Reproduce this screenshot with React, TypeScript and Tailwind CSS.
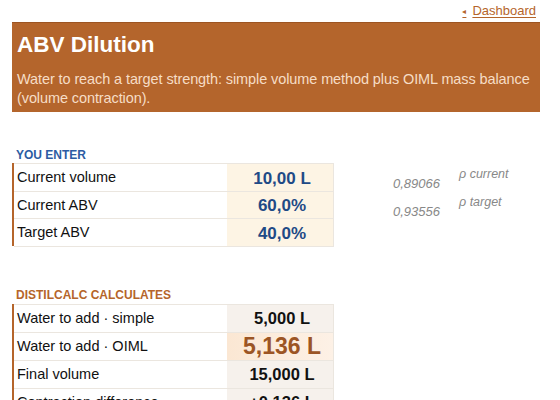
import React from "react";

const font = { fontFamily: '"Liberation Sans", Arial, sans-serif' };

type Row = { label: string; value: string; big?: boolean };

const inputs: Row[] = [
  { label: "Current volume", value: "10,00 L" },
  { label: "Current ABV", value: "60,0%" },
  { label: "Target ABV", value: "40,0%" },
];

const outputs: Row[] = [
  { label: "Water to add · simple", value: "5,000 L" },
  { label: "Water to add · OIML", value: "5,136 L", big: true },
  { label: "Final volume", value: "15,000 L" },
  { label: "Contraction difference", value: "+0,136 L" },
];

export default function App() {
  return (
    <div className="w-[560px] h-[400px] overflow-hidden bg-white" style={font}>
      {/* top link */}
      <div className="flex justify-end pr-[24px] pt-[3px] h-[22px]">
        <a className="text-[13px] leading-[16px] text-[#b5652b] underline underline-offset-2">
          <span className="text-[8px] align-middle mr-[6px]">◂</span>Dashboard
        </a>
      </div>

      {/* header */}
      <div className="ml-[12px] w-[528px] h-[90px] bg-[#b4652c] border-t border-[#9c5422] pl-[5px] pr-[1px] pt-[8px]">
        <h1 className="text-[22.5px] leading-[28px] font-bold text-white">ABV Dilution</h1>
        <p className="mt-[11px] text-[14.5px] leading-[19px] text-[#f6ddc6] tracking-[-0.1px]">
          Water to reach a target strength: simple volume method plus OIML mass balance (volume contraction).
        </p>
      </div>

      {/* inputs */}
      <div className="mt-[36px] ml-[16px] text-[12px] leading-[14px] font-bold text-[#2d5ca3]">YOU ENTER</div>
      <div className="flex mt-[1px]">
        <div className="ml-[12px] w-[322px] border-l-2 border-[#b5652b]">
          {inputs.map((r) => (
            <div key={r.label} className="flex h-[28.5px] border-t border-b border-[#ebe6df] -mb-px">
              <div className="w-[213px] pl-[3px] pt-[2px] flex items-center text-[14.5px] text-[#111]">{r.label}</div>
              <div className="flex-1 bg-[#fdf4e4] border-r border-[#ebe6df] flex items-center justify-center pl-[4px] pt-[2px] text-[17px] font-bold text-[#1f4a86]">
                {r.value}
              </div>
            </div>
          ))}
        </div>
        <div className="ml-[56px] w-[50px] pt-[11px] text-right text-[13px] italic text-[#888]">
          <div className="h-[28px]">0,89066</div>
          <div className="h-[28px]">0,93556</div>
        </div>
        <div className="ml-[19px] pt-[2px] text-[12.5px] italic text-[#888]">
          <div className="h-[28px]">ρ current</div>
          <div className="h-[28px]">ρ target</div>
        </div>
      </div>

      {/* outputs */}
      <div className="mt-[42px] ml-[16px] text-[12px] leading-[14px] font-bold text-[#b5652b]">DISTILCALC CALCULATES</div>
      <div className="mt-[2px] ml-[12px] w-[322px] border-l-2 border-[#b5652b]">
        {outputs.map((r) => (
          <div key={r.label} className="flex h-[29px] border-t border-b border-[#ebe6df] -mb-px">
            <div className="w-[213px] pl-[3px] pt-[1px] flex items-center text-[14.5px] text-[#111]">{r.label}</div>
            {r.big ? (
              <div className="flex-1 bg-gradient-to-r from-[#fbe7d3] to-[#fdf1e6] border-r border-[#ebe6df] flex items-center justify-center pl-[4px] pt-[1px] text-[23px] font-bold text-[#9c5524]">
                {r.value}
              </div>
            ) : (
              <div className="flex-1 bg-[#f6f1ec] border-r border-[#ebe6df] flex items-center justify-center pl-[4px] pt-[1px] text-[16.5px] font-bold text-[#111]">
                {r.value}
              </div>
            )}
          </div>
        ))}
      </div>
    </div>
  );
}
